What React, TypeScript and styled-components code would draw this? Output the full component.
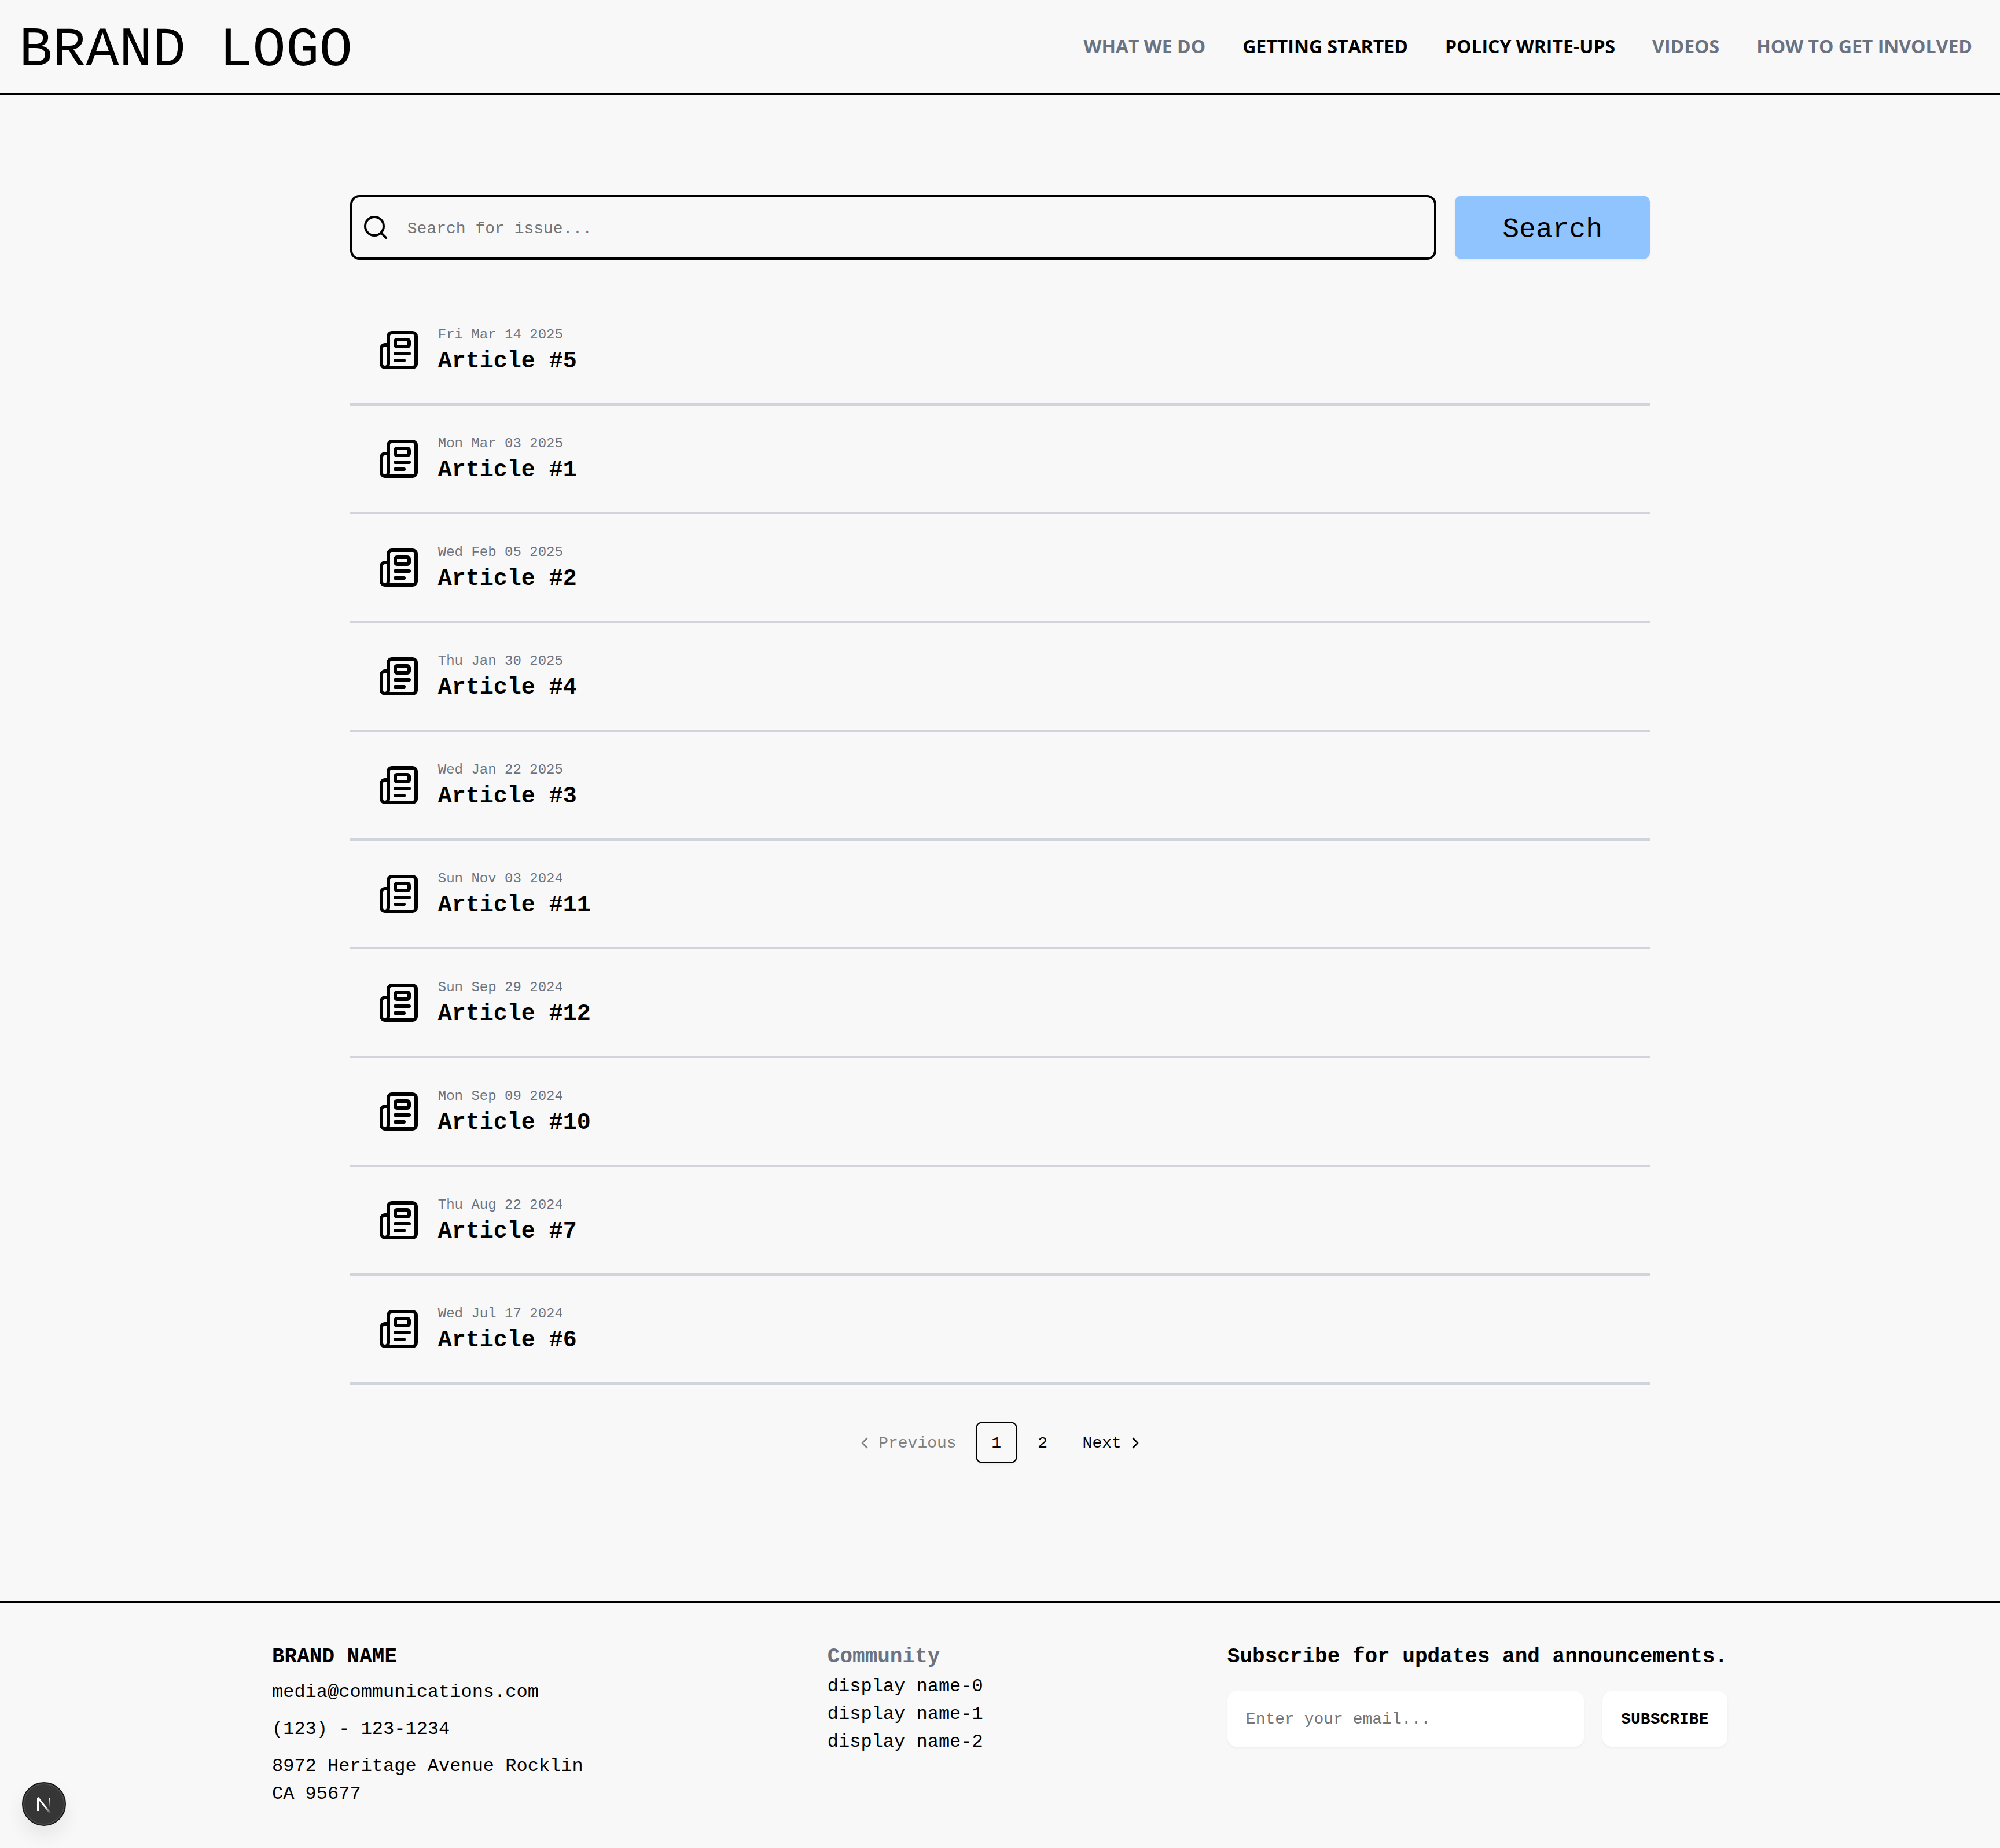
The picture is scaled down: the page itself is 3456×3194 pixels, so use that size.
import { ChevronLeft, ChevronRight, Newspaper, Search } from "lucide-react"
import styled, { createGlobalStyle } from "styled-components"

const mono = `"Liberation Mono", "DejaVu Sans Mono", monospace`

const GlobalStyle = createGlobalStyle`
  html, body {
    margin: 0;
    padding: 0;
    background: #f8f8f8;
    color: #000;
    font-family: ${mono};
  }
  * {
    box-sizing: border-box;
  }
`

const Header = styled.header`
  display: flex;
  align-items: center;
  justify-content: space-between;
  height: 164px;
  padding: 0 48px 0 33px;
  border-bottom: 4px solid #000;
`

const Logo = styled.div`
  padding-top: 15px;
  font-size: 96px;
  line-height: 1;
  white-space: pre;
`

const Nav = styled.nav`
  display: flex;
  gap: 64px;
`

const NavLink = styled.a<{ $dark?: boolean }>`
  font-family: "Open Sans", sans-serif;
  font-size: 32px;
  font-weight: 700;
  line-height: 40px;
  color: ${(p) => (p.$dark ? "#000" : "#6b7280")};
`

const Main = styled.main`
  width: 65%;
  margin: 0 auto;
  padding: 173px 0 238px;
`

const SearchRow = styled.form`
  display: flex;
  align-items: center;
  gap: 32px;
  margin-bottom: 64px;
`

const SearchBox = styled.label`
  flex: 1;
  display: flex;
  align-items: center;
  gap: 31px;
  height: 112px;
  padding: 0 16px;
  border: 4px solid #000;
  border-radius: 16px;
`

const SearchInput = styled.input`
  flex: 1;
  border: 0;
  outline: 0;
  padding: 4px 0 0;
  background: transparent;
  font-family: ${mono};
  font-size: 28px;
  &::placeholder {
    color: #757575;
    opacity: 1;
  }
`

const SearchButton = styled.button`
  width: 15%;
  height: 110px;
  padding: 8px 0 0;
  border: 0;
  border-radius: 12px;
  background: #90c4ff;
  color: #000;
  font-family: ${mono};
  font-size: 48px;
  box-shadow: 0 2px 4px rgba(0, 0, 0, 0.05);
`

const ArticleRow = styled.article`
  display: flex;
  align-items: center;
  gap: 32px;
  height: 188px;
  padding: 0 48px;
  border-bottom: 4px solid #d1d5db;
`

const ArticleText = styled.div`
  padding-top: 8px;
`

const ArticleDate = styled.div`
  font-size: 24px;
  line-height: 32px;
  color: #6b7280;
`

const ArticleTitle = styled.div`
  font-size: 40px;
  font-weight: 700;
  line-height: 60px;
`

const Pagination = styled.nav`
  display: flex;
  align-items: center;
  justify-content: center;
  gap: 8px;
  margin-top: 64px;
  font-size: 28px;
`

const PageStep = styled.a<{ $muted?: boolean }>`
  display: flex;
  align-items: center;
  gap: 8px;
  height: 72px;
  padding: 2px 25px 0;
  color: ${(p) => (p.$muted ? "#808080" : "#000")};
`

const PageNumber = styled.a<{ $active?: boolean }>`
  display: flex;
  align-items: center;
  justify-content: center;
  width: 72px;
  height: 72px;
  padding-top: 2px;
  border: 2px solid ${(p) => (p.$active ? "#000" : "transparent")};
  border-radius: 12px;
  box-shadow: ${(p) => (p.$active ? "0 2px 4px rgba(0, 0, 0, 0.05)" : "none")};
`

const Footer = styled.footer`
  display: flex;
  justify-content: space-between;
  height: 428px;
  padding: 66px 471px 0 470px;
  border-top: 4px solid #000;
`

const FooterColumn = styled.div`
  display: flex;
  flex-direction: column;
  font-size: 32px;
  line-height: 48px;
`

const FooterHeading = styled.div<{ $gray?: boolean }>`
  font-size: 36px;
  font-weight: 700;
  line-height: 54px;
  color: ${(p) => (p.$gray ? "#6b7280" : "#000")};
`

const ContactLine = styled.div`
  margin-top: 16px;
  white-space: pre-line;
  &:nth-child(2) {
    margin-top: 10px;
  }
`

const SubscribeForm = styled.form`
  display: flex;
  gap: 32px;
  margin-top: 32px;
`

const EmailInput = styled.input`
  width: 616px;
  height: 96px;
  padding: 0 32px;
  border: 0;
  border-radius: 16px;
  outline: 0;
  background: #fff;
  font-family: ${mono};
  font-size: 28px;
  box-shadow: 0 2px 4px rgba(0, 0, 0, 0.05);
  &::placeholder {
    color: #757575;
    opacity: 1;
  }
`

const SubscribeButton = styled.button`
  width: 216px;
  height: 96px;
  padding: 0;
  border: 0;
  border-radius: 16px;
  background: #fff;
  color: #000;
  font-family: ${mono};
  font-size: 28px;
  font-weight: 700;
  box-shadow: 0 2px 4px rgba(0, 0, 0, 0.05);
`

const DevBadge = styled.div`
  position: fixed;
  left: 38px;
  bottom: 38px;
  display: flex;
  align-items: center;
  justify-content: center;
  width: 76px;
  height: 76px;
  border: 2px solid #171717;
  border-radius: 50%;
  background: #363636;
  box-shadow: inset 0 0 0 2px #4d4d4d, 0 16px 32px rgba(0, 0, 0, 0.08);
`

const articles = [
  { date: "Fri Mar 14 2025", title: "Article #5" },
  { date: "Mon Mar 03 2025", title: "Article #1" },
  { date: "Wed Feb 05 2025", title: "Article #2" },
  { date: "Thu Jan 30 2025", title: "Article #4" },
  { date: "Wed Jan 22 2025", title: "Article #3" },
  { date: "Sun Nov 03 2024", title: "Article #11" },
  { date: "Sun Sep 29 2024", title: "Article #12" },
  { date: "Mon Sep 09 2024", title: "Article #10" },
  { date: "Thu Aug 22 2024", title: "Article #7" },
  { date: "Wed Jul 17 2024", title: "Article #6" },
]

export default function App() {
  return (
    <>
      <GlobalStyle />
      <Header>
        <Logo>BRAND LOGO</Logo>
        <Nav>
          <NavLink>WHAT WE DO</NavLink>
          <NavLink $dark>GETTING STARTED</NavLink>
          <NavLink $dark>POLICY WRITE-UPS</NavLink>
          <NavLink>VIDEOS</NavLink>
          <NavLink>HOW TO GET INVOLVED</NavLink>
        </Nav>
      </Header>
      <Main>
        <SearchRow>
          <SearchBox>
            <Search size={48} strokeWidth={2} />
            <SearchInput placeholder="Search for issue..." />
          </SearchBox>
          <SearchButton type="button">Search</SearchButton>
        </SearchRow>
        {articles.map((article) => (
          <ArticleRow key={article.title}>
            <Newspaper size={72} strokeWidth={2} />
            <ArticleText>
              <ArticleDate>{article.date}</ArticleDate>
              <ArticleTitle>{article.title}</ArticleTitle>
            </ArticleText>
          </ArticleRow>
        ))}
        <Pagination>
          <PageStep $muted>
            <ChevronLeft size={32} />
            Previous
          </PageStep>
          <PageNumber $active>1</PageNumber>
          <PageNumber>2</PageNumber>
          <PageStep>
            Next
            <ChevronRight size={32} />
          </PageStep>
        </Pagination>
      </Main>
      <Footer>
        <FooterColumn>
          <FooterHeading>BRAND NAME</FooterHeading>
          <ContactLine>media@communications.com</ContactLine>
          <ContactLine>(123) - 123-1234</ContactLine>
          <ContactLine>{"8972 Heritage Avenue Rocklin\nCA 95677"}</ContactLine>
        </FooterColumn>
        <FooterColumn>
          <FooterHeading $gray>Community</FooterHeading>
          <div>display name-0</div>
          <div>display name-1</div>
          <div>display name-2</div>
        </FooterColumn>
        <FooterColumn>
          <FooterHeading>Subscribe for updates and announcements.</FooterHeading>
          <SubscribeForm>
            <EmailInput placeholder="Enter your email..." />
            <SubscribeButton type="button">SUBSCRIBE</SubscribeButton>
          </SubscribeForm>
        </FooterColumn>
      </Footer>
      <DevBadge>
        <svg width="32" height="32" viewBox="0 0 32 32" fill="none" overflow="visible">
          <defs>
            <linearGradient id="nextDiagonal" x1="5" y1="5" x2="27" y2="32" gradientUnits="userSpaceOnUse">
              <stop offset="0.6" stopColor="#fff" />
              <stop offset="1" stopColor="#fff" stopOpacity="0" />
            </linearGradient>
            <linearGradient id="nextStem" x1="25" y1="5" x2="25" y2="23" gradientUnits="userSpaceOnUse">
              <stop offset="0" stopColor="#fff" />
              <stop offset="1" stopColor="#fff" stopOpacity="0" />
            </linearGradient>
          </defs>
          <path d="M5.5 28V5" stroke="#fff" strokeWidth="3" />
          <path d="M5.5 5L27 32" stroke="url(#nextDiagonal)" strokeWidth="3" />
          <path d="M25.5 5V23" stroke="url(#nextStem)" strokeWidth="3" />
        </svg>
      </DevBadge>
    </>
  )
}
